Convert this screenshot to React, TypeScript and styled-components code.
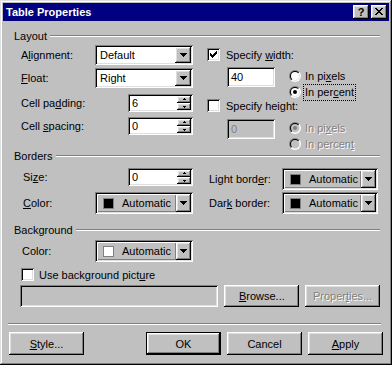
import React, { useId } from 'react';
import styled, { createGlobalStyle, css } from 'styled-components';

const GlobalStyle = createGlobalStyle`
  html, body {
    margin: 0;
    padding: 0;
    background: #c0c0c0;
  }
  body {
    font-family: 'Liberation Sans', Arial, sans-serif;
    font-size: 11px;
    color: #000;
  }
`;

const raised = css`
  box-shadow: inset -1px -1px #000, inset 1px 1px #fff, inset -2px -2px #808080, inset 2px 2px #dfdfdf;
`;

const sunken = css`
  box-shadow: inset 1px 1px #808080, inset -1px -1px #fff, inset 2px 2px #000, inset -2px -2px #dfdfdf;
`;

const disabledText = css`
  color: #808080;
  text-shadow: 1px 1px 0 #fff;
`;

const Window = styled.div`
  width: 392px;
  height: 365px;
  box-sizing: border-box;
  padding: 3px;
  background: #c0c0c0;
  box-shadow: inset -1px -1px #000, inset 1px 1px #dfdfdf, inset -2px -2px #808080, inset 2px 2px #fff;
  display: flex;
  flex-direction: column;
`;

const TitleBar = styled.div`
  height: 18px;
  background: #000080;
  display: flex;
  align-items: center;
  padding: 0 2px 0 3px;
  color: #fff;
`;

const TitleText = styled.div`
  flex: 1;
  font-weight: bold;
  font-size: 11px;
`;

const CaptionButton = styled.div<{ $ml?: number }>`
  width: 16px;
  height: 14px;
  box-sizing: border-box;
  background: #c0c0c0;
  ${raised};
  margin-left: ${({ $ml }) => ($ml ? `${$ml}px` : '0')};
  display: flex;
  align-items: center;
  justify-content: center;
  color: #000;
  font-weight: bold;
  font-size: 11px;
  line-height: 12px;
  padding-bottom: 1px;
`;

const Body = styled.div`
  padding: 9px 9px 0 11px;
  display: flex;
  flex-direction: column;
`;

const GroupHeader = styled.div<{ $mt?: number }>`
  display: flex;
  align-items: center;
  height: 12px;
  margin-top: ${({ $mt }) => $mt || 0}px;
`;

const GroupTitle = styled.span`
  line-height: 12px;
  padding-right: 3px;
`;

const Rule = styled.div`
  flex: 1;
  height: 0;
  border-top: 1px solid #808080;
  border-bottom: 1px solid #fff;
`;

const SectionGrid = styled.div<{ $gap: number; $h?: number; $mt?: number }>`
  display: grid;
  grid-template-columns: 179px 1fr;
  column-gap: ${({ $gap }) => $gap}px;
  height: ${({ $h }) => ($h ? `${$h}px` : 'auto')};
  margin-top: ${({ $mt }) => $mt || 0}px;
`;

const Column = styled.div<{ $pl?: number; $pt?: number; $pr?: number; $w?: number }>`
  display: flex;
  flex-direction: column;
  width: ${({ $w }) => ($w ? `${$w}px` : 'auto')};
  box-sizing: border-box;
  padding: ${({ $pt }) => $pt || 0}px ${({ $pr }) => $pr || 0}px 0 ${({ $pl }) => $pl || 0}px;
`;

const FieldRow = styled.div<{ $h: number; $mt?: number }>`
  display: flex;
  align-items: center;
  justify-content: space-between;
  height: ${({ $h }) => $h}px;
  margin-top: ${({ $mt }) => $mt || 0}px;
`;

const Label = styled.span<{ $disabled?: boolean }>`
  white-space: nowrap;
  ${({ $disabled }) => $disabled && disabledText};
`;

const Key = styled.span`
  text-decoration: underline;
`;

const ComboBox = styled.div<{ $w: number }>`
  width: ${({ $w }) => $w}px;
  height: 20px;
  box-sizing: border-box;
  padding: 2px;
  background: #fff;
  ${sunken};
  display: flex;
`;

const ComboText = styled.div`
  flex: 1;
  padding-left: 3px;
  line-height: 16px;
`;

const DropButton = styled.div<{ $h?: number; $w?: number }>`
  width: ${({ $w }) => $w || 16}px;
  flex-shrink: 0;
  height: ${({ $h }) => $h || 16}px;
  box-sizing: border-box;
  background: #c0c0c0;
  ${raised};
  display: flex;
  align-items: center;
  justify-content: center;
`;

const SpinBox = styled.div`
  width: 65px;
  height: 18px;
  box-sizing: border-box;
  padding: 2px;
  background: #fff;
  ${sunken};
  display: flex;
`;

const SpinText = styled.div`
  flex: 1;
  padding-left: 2px;
  line-height: 14px;
`;

const SpinButtons = styled.div`
  width: 14px;
  display: flex;
  flex-direction: column;
`;

const SpinButton = styled.div`
  height: 7px;
  box-sizing: border-box;
  background: #c0c0c0;
  ${raised};
  display: flex;
  align-items: center;
  justify-content: center;
`;

const ColorBox = styled.div<{ $w: number }>`
  width: ${({ $w }) => $w}px;
  height: 22px;
  box-sizing: border-box;
  padding: 2px;
  background: #c0c0c0;
  ${sunken};
  display: flex;
`;

const ColorFace = styled.div`
  flex: 1;
  min-width: 0;
  display: flex;
  align-items: center;
  padding-left: 6px;
  white-space: nowrap;
  overflow: hidden;
  box-shadow: inset 1px 1px #fff, inset -1px -1px #808080;
`;

const Swatch = styled.div<{ $color: string }>`
  width: 11px;
  height: 11px;
  flex-shrink: 0;
  box-sizing: border-box;
  border: 1px solid #808080;
  background: ${({ $color }) => $color};
  margin-right: 8px;
`;

const TextField = styled.div<{ $w: number; $h?: number; $disabled?: boolean }>`
  width: ${({ $w }) => $w}px;
  height: ${({ $h }) => $h || 20}px;
  box-sizing: border-box;
  padding: 2px 2px 2px 4px;
  line-height: 16px;
  background: ${({ $disabled }) => ($disabled ? '#c0c0c0' : '#fff')};
  ${sunken};
  ${({ $disabled }) => $disabled && 'color: #808080;'};
`;

const CheckRow = styled.div<{ $mt?: number; $pl?: number; $gap?: number }>`
  display: flex;
  align-items: center;
  height: 13px;
  margin-top: ${({ $mt }) => $mt || 0}px;
  padding-left: ${({ $pl }) => $pl || 0}px;
  gap: ${({ $gap }) => $gap || 6}px;
`;

const CheckBoxFrame = styled.div`
  width: 13px;
  height: 13px;
  box-sizing: border-box;
  background: #fff;
  ${sunken};
  display: flex;
  align-items: center;
  justify-content: center;
`;

const OptionBlock = styled.div<{ $mt: number }>`
  display: flex;
  align-items: flex-start;
  margin-top: ${({ $mt }) => $mt}px;
  padding-left: 20px;
`;

const RadioList = styled.div`
  display: flex;
  flex-direction: column;
  gap: 4px;
  margin-left: 14px;
  padding-top: 3px;
`;

const RadioRow = styled.div`
  display: flex;
  align-items: center;
  height: 12px;
`;

const RadioLabel = styled.span<{ $focused?: boolean; $disabled?: boolean }>`
  margin-left: 2px;
  padding: 1px 1px;
  line-height: 13px;
  border: 1px ${({ $focused }) => ($focused ? 'dotted #000' : 'solid transparent')};
  white-space: nowrap;
  ${({ $disabled }) => $disabled && disabledText};
`;

const PathRow = styled.div<{ $mt: number }>`
  display: flex;
  margin-top: ${({ $mt }) => $mt}px;
  padding-left: 6px;
  gap: 6px;
`;

const Button = styled.div<{ $h?: number; $default?: boolean; $disabled?: boolean; $push?: boolean }>`
  width: 75px;
  height: ${({ $h }) => $h || 23}px;
  box-sizing: border-box;
  background: #c0c0c0;
  ${raised};
  display: flex;
  align-items: center;
  justify-content: center;
  ${({ $default }) => $default && 'border: 1px solid #000;'};
  ${({ $push }) => $push && 'margin-left: auto;'};
  ${({ $disabled }) => $disabled && disabledText};
`;

const Footer = styled.div`
  padding: 0 6px 0 5px;
  display: flex;
  flex-direction: column;
`;

const Separator = styled.div`
  margin: 16px 2px 0 0;
  border-top: 1px solid #808080;
  border-bottom: 1px solid #fff;
`;

const ButtonRow = styled.div`
  display: flex;
  gap: 6px;
  margin-top: 7px;
  padding-left: 1px;
`;

const DownArrow = () => (
  <svg width="7" height="4" viewBox="0 0 7 4" shapeRendering="crispEdges">
    <path d="M0 0h7v1H0zM1 1h5v1H1zM2 2h3v1H2zM3 3h1v1H3z" fill="#000" />
  </svg>
);

const SpinArrow = ({ up }: { up?: boolean }) => (
  <svg width="5" height="3" viewBox="0 0 5 3" shapeRendering="crispEdges">
    <path d={up ? 'M2 0h1v1H2zM1 1h3v1H1z' : 'M1 1h3v1H1zM2 2h1v1H2z'} fill="#000" />
  </svg>
);

const CloseGlyph = () => (
  <svg width="8" height="7" viewBox="0 0 8 7" shapeRendering="crispEdges">
    <path
      d="M0 0h2v1H0zM6 0h2v1H6zM1 1h2v1H1zM5 1h2v1H5zM2 2h4v1H2zM3 3h2v1H3zM2 4h4v1H2zM1 5h2v1H1zM5 5h2v1H5zM0 6h2v1H0zM6 6h2v1H6z"
      fill="#000"
    />
  </svg>
);

const Combo = ({ value, width = 98 }: { value: string; width?: number }) => (
  <ComboBox $w={width}>
    <ComboText>{value}</ComboText>
    <DropButton>
      <DownArrow />
    </DropButton>
  </ComboBox>
);

const Spinner = ({ value }: { value: string }) => (
  <SpinBox>
    <SpinText>{value}</SpinText>
    <SpinButtons>
      <SpinButton>
        <SpinArrow up />
      </SpinButton>
      <SpinButton>
        <SpinArrow />
      </SpinButton>
    </SpinButtons>
  </SpinBox>
);

const ColorPicker = ({ color, width = 98 }: { color: string; width?: number }) => (
  <ColorBox $w={width}>
    <ColorFace>
      <Swatch $color={color} />
      Automatic
    </ColorFace>
    <DropButton $h={18} $w={15}>
      <DownArrow />
    </DropButton>
  </ColorBox>
);

const Checkbox = ({ checked }: { checked?: boolean }) => (
  <CheckBoxFrame>
    {checked && (
      <svg width="7" height="7" viewBox="0 0 7 7" shapeRendering="crispEdges">
        <path
          d="M6 0h1v1H6zM5 1h2v1H5zM0 2h1v1H0zM4 2h3v1H4zM0 3h2v1H0zM3 3h3v1H3zM0 4h5v1H0zM1 5h3v1H1zM2 6h1v1H2z"
          fill="#000"
        />
      </svg>
    )}
  </CheckBoxFrame>
);

const Radio = ({ checked, disabled }: { checked?: boolean; disabled?: boolean }) => {
  const id = useId().replace(/[^a-zA-Z0-9]/g, '');
  return (
    <svg width="12" height="12" viewBox="0 0 12 12">
      <defs>
        <linearGradient id={`ro${id}`} x1="0" y1="0" x2="1" y2="1">
          <stop offset="0.5" stopColor="#808080" />
          <stop offset="0.5" stopColor="#fff" />
        </linearGradient>
        <linearGradient id={`ri${id}`} x1="0" y1="0" x2="1" y2="1">
          <stop offset="0.5" stopColor="#000" />
          <stop offset="0.5" stopColor="#dfdfdf" />
        </linearGradient>
      </defs>
      <circle cx="6" cy="6" r="6" fill={`url(#ro${id})`} />
      <circle cx="6" cy="6" r="5" fill={`url(#ri${id})`} />
      <circle cx="6" cy="6" r="4" fill={disabled ? '#c0c0c0' : '#fff'} />
      {checked && <circle cx="6" cy="6" r="2" fill={disabled ? '#808080' : '#000'} />}
    </svg>
  );
};

export default function App() {
  return (
    <>
      <GlobalStyle />
      <Window>
        <TitleBar>
          <TitleText>Table Properties</TitleText>
          <CaptionButton>?</CaptionButton>
          <CaptionButton $ml={2}>
            <CloseGlyph />
          </CaptionButton>
        </TitleBar>

        <Body>
          <GroupHeader>
            <GroupTitle>Layout</GroupTitle>
            <Rule />
          </GroupHeader>
          <SectionGrid $gap={12} $h={108}>
            <Column $pl={7} $pt={3}>
              <FieldRow $h={20}>
                <Label>
                  A<Key>l</Key>ignment:
                </Label>
                <Combo value="Default" />
              </FieldRow>
              <FieldRow $h={20} $mt={3}>
                <Label>
                  <Key>F</Key>loat:
                </Label>
                <Combo value="Right" />
              </FieldRow>
              <FieldRow $h={18} $mt={6}>
                <Label>
                  Cell pa<Key>d</Key>ding:
                </Label>
                <Spinner value="6" />
              </FieldRow>
              <FieldRow $h={18} $mt={5}>
                <Label>
                  Cell <Key>s</Key>pacing:
                </Label>
                <Spinner value="0" />
              </FieldRow>
            </Column>

            <Column $pl={2} $pt={6}>
              <CheckRow>
                <Checkbox checked />
                <Label>
                  Specify <Key>w</Key>idth:
                </Label>
              </CheckRow>
              <OptionBlock $mt={6}>
                <TextField $w={48}>40</TextField>
                <RadioList>
                  <RadioRow>
                    <Radio />
                    <RadioLabel>
                      In pi<Key>x</Key>els
                    </RadioLabel>
                  </RadioRow>
                  <RadioRow>
                    <Radio checked />
                    <RadioLabel $focused>
                      In per<Key>c</Key>ent
                    </RadioLabel>
                  </RadioRow>
                </RadioList>
              </OptionBlock>
              <CheckRow $mt={1}>
                <Checkbox />
                <Label>Specify height:</Label>
              </CheckRow>
              <OptionBlock $mt={7}>
                <TextField $w={48} $disabled>
                  0
                </TextField>
                <RadioList>
                  <RadioRow>
                    <Radio checked disabled />
                    <RadioLabel $disabled>
                      In pi<Key>x</Key>els
                    </RadioLabel>
                  </RadioRow>
                  <RadioRow>
                    <Radio disabled />
                    <RadioLabel $disabled>
                      In percen<Key>t</Key>
                    </RadioLabel>
                  </RadioRow>
                </RadioList>
              </OptionBlock>
            </Column>
          </SectionGrid>

          <GroupHeader>
            <GroupTitle>Borders</GroupTitle>
            <Rule />
          </GroupHeader>
          <SectionGrid $gap={16} $mt={6}>
            <Column $pl={9}>
              <FieldRow $h={18}>
                <Label>
                  Si<Key>z</Key>e:
                </Label>
                <Spinner value="0" />
              </FieldRow>
              <FieldRow $h={22} $mt={6}>
                <Label>
                  <Key>C</Key>olor:
                </Label>
                <ColorPicker color="#000" />
              </FieldRow>
            </Column>
            <Column $pr={2}>
              <FieldRow $h={22}>
                <Label>
                  Light bord<Key>e</Key>r:
                </Label>
                <ColorPicker color="#000" width={96} />
              </FieldRow>
              <FieldRow $h={22} $mt={2}>
                <Label>
                  Dar<Key>k</Key> border:
                </Label>
                <ColorPicker color="#000" width={96} />
              </FieldRow>
            </Column>
          </SectionGrid>

          <GroupHeader $mt={10}>
            <GroupTitle>Background</GroupTitle>
            <Rule />
          </GroupHeader>
          <Column $w={179} $pl={8} $pt={4}>
            <FieldRow $h={22}>
              <Label>Color:</Label>
              <ColorPicker color="#fff" />
            </FieldRow>
          </Column>
          <CheckRow $mt={6} $pl={7} $gap={5}>
            <Checkbox />
            <Label>
              Use background pict<Key>u</Key>re
            </Label>
          </CheckRow>
          <PathRow $mt={4}>
            <TextField $w={199} $h={22} $disabled />
            <Button $h={22}>
              <Key>B</Key>rowse...
            </Button>
            <Button $h={22} $disabled>
              Proper<Key>t</Key>ies...
            </Button>
          </PathRow>
        </Body>

        <Footer>
          <Separator />
          <ButtonRow>
            <Button>
              <Key>S</Key>tyle...
            </Button>
            <Button $default $push>
              OK
            </Button>
            <Button>Cancel</Button>
            <Button>
              <Key>A</Key>pply
            </Button>
          </ButtonRow>
        </Footer>
      </Window>
    </>
  );
}
